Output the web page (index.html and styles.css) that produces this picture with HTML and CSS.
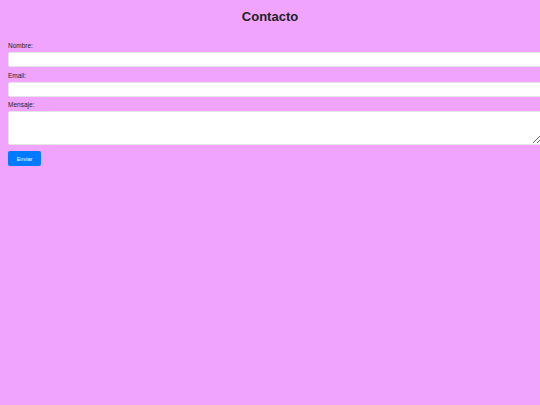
FILE: index.html
```html
<!DOCTYPE html>
<html lang="es">
<head>
<meta charset="utf-8">
<title>Contacto</title>
<link rel="stylesheet" href="styles.css">
</head>
<body>
<main class="page">
  <h1 class="title">Contacto</h1>
  <form class="form">
    <label class="label" for="nombre">Nombre:</label>
    <input class="field" type="text" id="nombre">
    <label class="label" for="email">Email:</label>
    <input class="field" type="email" id="email">
    <label class="label" for="mensaje">Mensaje:</label>
    <textarea class="field area" id="mensaje"></textarea>
    <button class="btn" type="submit">Enviar</button>
  </form>
</main>
</body>
</html>
```

FILE: styles.css
```css
html, body {
  margin: 0;
  padding: 0;
  background: #f0a4fe;
  overflow: hidden;
}
body {
  font-family: "Liberation Sans", Arial, sans-serif;
  color: #222;
}
.page {
  padding: 9px 0 0 8px;
}
.title {
  margin: 0;
  font-size: 13px;
  line-height: 15px;
  font-weight: bold;
  text-align: center;
  padding-right: 8px;
}
.form {
  display: flex;
  flex-direction: column;
  align-items: flex-start;
  margin-top: 18px;
}
.label {
  font-size: 6.5px;
  line-height: 8px;
  height: 8px;
  margin-bottom: 2px;
}
.field {
  box-sizing: border-box;
  width: calc(100% + 20px);
  height: 15px;
  margin: 0 0 5px 0;
  padding: 0 4px;
  border: 1px solid #e4e4e4;
  border-radius: 2px;
  background: #fff;
  font-family: inherit;
  font-size: 7px;
  flex-shrink: 0;
}
.form .label:nth-of-type(3) {
  margin-top: -1px;
}
.area {
  height: 34px;
  margin-bottom: 6px;
  resize: vertical;
  width: 534px;
}
.btn {
  width: 33px;
  height: 15px;
  padding: 0;
  border: none;
  border-radius: 2px;
  background: #007bff;
  color: #fff;
  font-family: inherit;
  font-size: 5.5px;
}
```
